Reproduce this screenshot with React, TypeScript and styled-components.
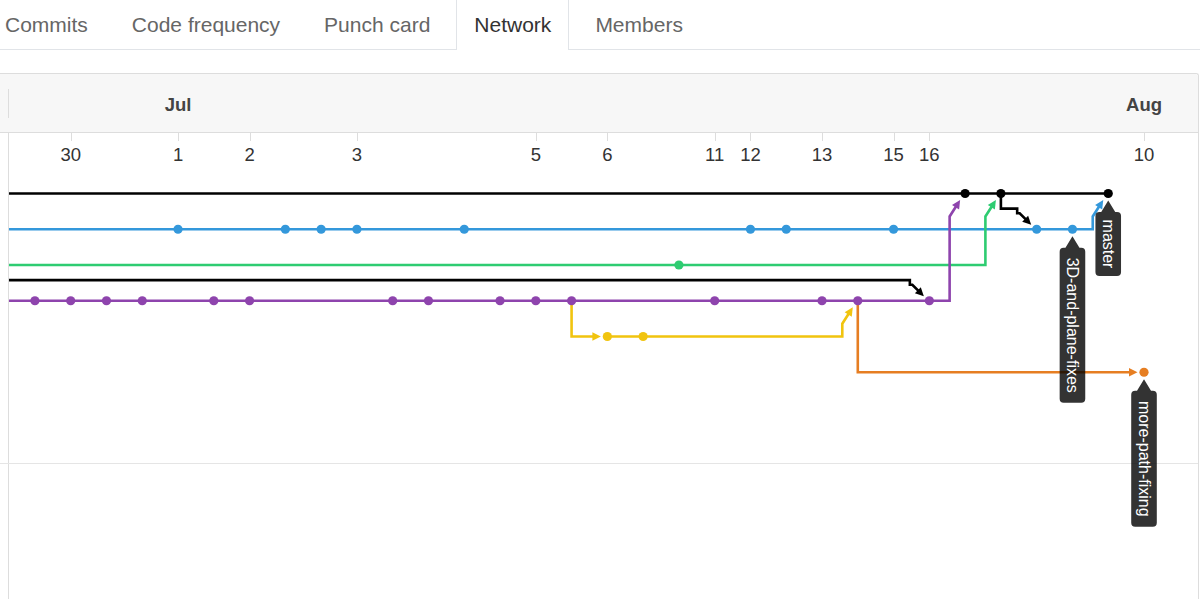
import React from "react";
import styled, { createGlobalStyle } from "styled-components";

const FONT = `"Liberation Sans", Arial, Helvetica, sans-serif`;

const COL0 = 34.92;
const COLW = 35.777;
const colX = (i: number) => COL0 + COLW * i;
const ROW0 = 193.5;
const ROWH = 35.75;
const rowY = (i: number) => ROW0 + ROWH * i;

const GRAPH_LEFT = 9;
const GRAPH_TOP = 133;

const COLORS = {
  black: "#000000",
  blue: "#3498db",
  green: "#2ecc71",
  purple: "#8e44ad",
  yellow: "#f1c40f",
  orange: "#e67e22",
};

type P = [number, number];

const GlobalStyle = createGlobalStyle`
  html, body { margin: 0; padding: 0; background: #fff; }
  body { font-family: ${FONT}; overflow: hidden; }
  * { box-sizing: border-box; }
`;

const Page = styled.div`
  width: 1200px;
  height: 599px;
  overflow: hidden;
`;

const TabNav = styled.nav`
  display: flex;
  align-items: flex-end;
  gap: 8px;
  height: 50px;
  margin-left: -13px;
  border-bottom: 1px solid #e1e4e8;
`;

const Tab = styled.a<{ $active?: boolean }>`
  display: flex;
  align-items: center;
  height: 50px;
  margin-bottom: -1px;
  padding: 0 17px 1px;
  font-size: 21px;
  text-decoration: none;
  white-space: nowrap;
  color: ${(p) => (p.$active ? "#333" : "#666")};
  background: ${(p) => (p.$active ? "#fff" : "transparent")};
  border-left: 1px solid ${(p) => (p.$active ? "#e1e4e8" : "transparent")};
  border-right: 1px solid ${(p) => (p.$active ? "#e1e4e8" : "transparent")};
`;

const Panel = styled.section`
  margin: 23px 1px 0 -120px;
  border: 1px solid #ddd;
  border-bottom: 0;
  border-radius: 3px 3px 0 0;
`;

const Header = styled.div`
  display: grid;
  grid-template-columns: 127px 1px 1fr;
  height: 59px;
  background: #f7f7f7;
  border-bottom: 1px solid #ddd;
  border-radius: 3px 3px 0 0;
`;

const HeaderDivider = styled.div`
  align-self: center;
  height: 29px;
  background: #ddd;
`;

const MonthAxis = styled.div`
  position: relative;
`;

const MonthLabel = styled.span`
  position: absolute;
  top: 0;
  bottom: 0;
  display: flex;
  align-items: center;
  padding-top: 3px;
  transform: translateX(-50%);
  font-size: 18.5px;
  font-weight: bold;
  color: #444;
`;

const Section = styled.div<{ $h: number }>`
  display: grid;
  grid-template-columns: 128px 1fr;
  height: ${(p) => p.$h}px;
  border-bottom: 1px solid #e5e5e5;
`;

const NameCell = styled.div`
  border-right: 1px solid #ddd;
`;

const GraphCell = styled.div`
  min-width: 0;
`;

const Canvas = styled.svg`
  display: block;
  overflow: visible;
`;

const DayText = styled.text`
  font-family: ${FONT};
  font-size: 18.5px;
  fill: #333;
  text-anchor: middle;
`;

const TagText = styled.text`
  font-family: ${FONT};
  font-size: 16px;
  fill: #fff;
  text-anchor: middle;
`;

const tabs = ["Commits", "Code frequency", "Punch card", "Network", "Members"];

const months: [number, string][] = [
  [4, "Jul"],
  [31, "Aug"],
];

const days: [number, string][] = [
  [1, "30"],
  [4, "1"],
  [6, "2"],
  [9, "3"],
  [14, "5"],
  [16, "6"],
  [19, "11"],
  [20, "12"],
  [22, "13"],
  [24, "15"],
  [25, "16"],
  [31, "10"],
];

const dots: { color: string; row: number; cols: number[] }[] = [
  { color: COLORS.black, row: 0, cols: [26, 27, 30] },
  { color: COLORS.blue, row: 1, cols: [4, 7, 8, 9, 12, 20, 21, 24, 28, 29] },
  { color: COLORS.green, row: 2, cols: [18] },
  { color: COLORS.purple, row: 3, cols: [0, 1, 2, 3, 5, 6, 10, 11, 13, 14, 15, 19, 22, 23, 25] },
  { color: COLORS.yellow, row: 4, cols: [16, 17] },
  { color: COLORS.orange, row: 5, cols: [31] },
];

const up = (col: number, row: number): P[] => {
  const tx = colX(col);
  const ty = rowY(row);
  return [
    [tx - 15.5, ty + 23],
    [tx - 5, ty + 6.5],
  ];
};

const bolt = (col: number, row: number): P[] => {
  const tx = colX(col);
  const ty = rowY(row);
  return [
    [tx - 19.5, ty - 20.6],
    [tx - 19.5, ty - 16],
    [tx - 17, ty - 16],
    [tx - 5.5, ty - 4.5],
  ];
};

const edges: { color: string; pts: P[]; arrow?: boolean }[] = [
  { color: COLORS.black, pts: [[GRAPH_LEFT, rowY(0)], [colX(30), rowY(0)]] },
  {
    color: COLORS.blue,
    pts: [[GRAPH_LEFT, rowY(1)], [colX(30) - 15.5, rowY(1)], ...up(30, 0)],
    arrow: true,
  },
  {
    color: COLORS.green,
    pts: [[GRAPH_LEFT, rowY(2)], [colX(27) - 15.5, rowY(2)], ...up(27, 0)],
    arrow: true,
  },
  {
    color: COLORS.black,
    pts: [[GRAPH_LEFT, rowY(3) - 20.6], ...bolt(25, 3)],
    arrow: true,
  },
  {
    color: COLORS.black,
    pts: [[colX(27), rowY(0)], [colX(27), rowY(1) - 20.6], ...bolt(28, 1)],
    arrow: true,
  },
  {
    color: COLORS.purple,
    pts: [[GRAPH_LEFT, rowY(3)], [colX(26) - 15.5, rowY(3)], ...up(26, 0)],
    arrow: true,
  },
  {
    color: COLORS.yellow,
    pts: [[colX(15), rowY(3)], [colX(15), rowY(4)], [colX(16) - 6.5, rowY(4)]],
    arrow: true,
  },
  {
    color: COLORS.yellow,
    pts: [[colX(16), rowY(4)], [colX(23) - 15.5, rowY(4)], ...up(23, 3)],
    arrow: true,
  },
  {
    color: COLORS.orange,
    pts: [[colX(23), rowY(3)], [colX(23), rowY(5)], [colX(31) - 6.5, rowY(5)]],
    arrow: true,
  },
];

const tags: { col: number; row: number; text: string; h: number }[] = [
  { col: 30, row: 0, text: "master", h: 64 },
  { col: 29, row: 1, text: "3D-and-plane-fixes", h: 155 },
  { col: 31, row: 5, text: "more-path-fixing", h: 136 },
];

function edgeGeometry(pts: P[], arrow?: boolean) {
  if (!arrow) {
    return { d: "M" + pts.map((p) => p.join(",")).join(" L"), head: "" };
  }
  const [x1, y1] = pts[pts.length - 2];
  const [x2, y2] = pts[pts.length - 1];
  const dx = x2 - x1;
  const dy = y2 - y1;
  const len = Math.hypot(dx, dy);
  const ux = dx / len;
  const uy = dy / len;
  const L = 8.5;
  const W = 4.2;
  const bx = x2 - ux * L;
  const by = y2 - uy * L;
  const head = `${x2},${y2} ${bx - uy * W},${by + ux * W} ${bx + uy * W},${by - ux * W}`;
  const end: P = [x2 - ux * (L - 2), y2 - uy * (L - 2)];
  const line = [...pts.slice(0, -1), end];
  return { d: "M" + line.map((p) => p.join(",")).join(" L"), head };
}

function tagPath(cx: number, tip: number, h: number) {
  const w = 25.6;
  const ph = 11.5;
  const hw = 7;
  const r = 4;
  const top = tip + ph;
  const bottom = top + h;
  const l = cx - w / 2;
  const rt = cx + w / 2;
  return [
    `M${cx},${tip}`,
    `L${cx + hw},${top}`,
    `H${rt - r}`,
    `Q${rt},${top} ${rt},${top + r}`,
    `V${bottom - r}`,
    `Q${rt},${bottom} ${rt - r},${bottom}`,
    `H${l + r}`,
    `Q${l},${bottom} ${l},${bottom - r}`,
    `V${top + r}`,
    `Q${l},${top} ${l + r},${top}`,
    `H${cx - hw}`,
    "Z",
  ].join(" ");
}

function NetworkGraph() {
  return (
    <Canvas
      width={1189}
      height={330}
      viewBox={`${GRAPH_LEFT} ${GRAPH_TOP} 1189 330`}
    >
      {days.map(([c, label]) => {
        const x = Math.round(colX(c)) + 0.5;
        return (
          <g key={c}>
            <line x1={x} x2={x} y1={133} y2={141} stroke="#ddd" strokeWidth={1} />
            <DayText x={colX(c)} y={161}>
              {label}
            </DayText>
          </g>
        );
      })}
      {edges.map((e, i) => {
        const g = edgeGeometry(e.pts, e.arrow);
        return (
          <g key={i}>
            <path d={g.d} fill="none" stroke={e.color} strokeWidth={2.6} strokeLinejoin="miter" />
            {g.head && <polygon points={g.head} fill={e.color} />}
          </g>
        );
      })}
      {dots.map((d) =>
        d.cols.map((c) => (
          <circle key={`${d.row}-${c}`} cx={colX(c)} cy={rowY(d.row)} r={4.6} fill={d.color} />
        ))
      )}
      {tags.map((t) => {
        const cx = colX(t.col);
        const tip = rowY(t.row) + 7;
        const top = tip + 11.5;
        const cy = top + t.h / 2;
        return (
          <g key={t.text}>
            <path d={tagPath(cx, tip, t.h)} fill="rgba(0,0,0,0.8)" />
            <TagText
              transform={`translate(${cx},${cy}) rotate(90)`}
              x={0}
              y={0}
              dy="5.5"
            >
              {t.text}
            </TagText>
          </g>
        );
      })}
    </Canvas>
  );
}

export default function App() {
  return (
    <Page>
      <GlobalStyle />
      <TabNav>
        {tabs.map((t) => (
          <Tab key={t} $active={t === "Network"}>
            {t}
          </Tab>
        ))}
      </TabNav>
      <Panel>
        <Header>
          <div />
          <HeaderDivider />
          <MonthAxis>
            {months.map(([c, m]) => (
              <MonthLabel key={m} style={{ left: colX(c) - GRAPH_LEFT }}>
                {m}
              </MonthLabel>
            ))}
          </MonthAxis>
        </Header>
        <Section $h={331}>
          <NameCell />
          <GraphCell>
            <NetworkGraph />
          </GraphCell>
        </Section>
        <Section $h={200}>
          <NameCell />
          <GraphCell />
        </Section>
      </Panel>
    </Page>
  );
}
